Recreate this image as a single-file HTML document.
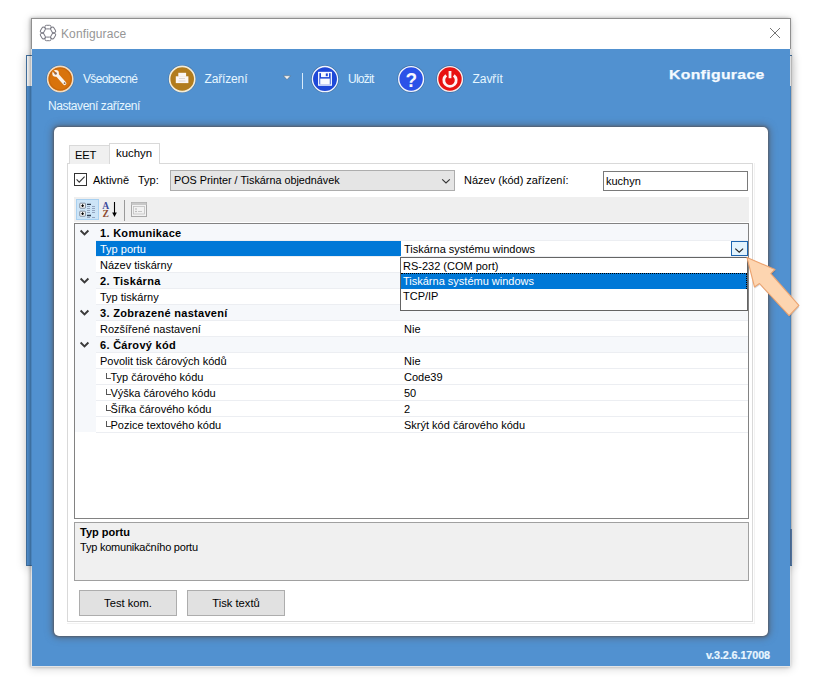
<!DOCTYPE html>
<html><head><meta charset="utf-8">
<style>
*{box-sizing:border-box;margin:0;padding:0}
html,body{width:822px;height:700px;overflow:hidden;background:#fff;font-family:"Liberation Sans",sans-serif;font-size:11px;color:#000}
.a{position:absolute}
.t{position:absolute;white-space:nowrap;line-height:1}
</style></head><body>
<div class="a" style="left:26px;top:55px;width:766px;height:511px;background:#5191d0;border:1px solid rgba(30,30,30,0.28);box-shadow:0 1px 10px 0 rgba(0,0,0,0.2)"></div>
<div class="a" style="left:27px;top:56px;width:764px;height:30px;background:#fafafa"></div>
<div class="a" style="left:31px;top:18px;width:760px;height:649px;box-shadow:0 1px 9px 0 rgba(0,0,0,0.2),-1px 0 3px 0 rgba(0,0,0,0.25)"></div>
<div class="a" style="left:32px;top:19px;width:758px;height:647px;background:#5191d0"></div>
<div class="a" style="left:791px;top:56px;width:2px;height:473px;background:linear-gradient(to right,#a8a8a8,#e4e4e4)"></div>
<div class="a" style="left:790px;top:529px;width:2px;height:36px;background:#4f709a"></div>
<div class="a" style="left:32px;top:19px;width:758px;height:30px;background:#fff"></div>
<div class="a" style="left:31px;top:18px;width:760px;height:649px;border:1px solid rgba(20,30,50,0.12)"></div>
<div class="a" style="left:31px;top:18px;width:760px;height:31px;border:1px solid #8f8f8f;border-bottom:none"></div>
<svg class="a" style="left:39px;top:24px" width="18" height="18" viewBox="0 0 18 18"><g fill="none" stroke="#7a7a84" stroke-width="1"><rect x="6" y="1.3" width="6" height="3.6" rx="1.3" transform="rotate(0 9 9)"/><rect x="6" y="1.3" width="6" height="3.6" rx="1.3" transform="rotate(60 9 9)"/><rect x="6" y="1.3" width="6" height="3.6" rx="1.3" transform="rotate(120 9 9)"/><rect x="6" y="1.3" width="6" height="3.6" rx="1.3" transform="rotate(180 9 9)"/><rect x="6" y="1.3" width="6" height="3.6" rx="1.3" transform="rotate(240 9 9)"/><rect x="6" y="1.3" width="6" height="3.6" rx="1.3" transform="rotate(300 9 9)"/></g></svg>
<div class="t" style="left:61px;top:28px;font-size:12px;color:#969696;letter-spacing:0.12px">Konfigurace</div>
<svg class="a" style="left:769px;top:27px" width="12" height="12" viewBox="0 0 12 12"><path d="M1 1L11 11M11 1L1 11" stroke="#666" stroke-width="0.9"/></svg>
<svg class="a" style="left:44px;top:63px" width="32" height="32" viewBox="0 0 32 32">
<circle cx="16.2" cy="16" r="13.9" fill="#2f4a6a" opacity="0.45"/>
<circle cx="16.2" cy="16" r="12.6" fill="#d8730c" stroke="#f3dcc0" stroke-width="1.6"/>
<circle cx="16.2" cy="16" r="11" fill="none" stroke="#c0600a" stroke-width="1.2" opacity="0.6"/>
<path d="M12.4 11.2 L20.6 20.3" stroke="#fbf3ea" stroke-width="3.5" stroke-linecap="round"/>
<circle cx="11.6" cy="10.4" r="3.3" fill="#fbf3ea"/>
<path d="M11.6 10.4 L8.6 7.4" stroke="#d8730c" stroke-width="1.8"/>
<circle cx="11.7" cy="10.5" r="1.2" fill="#8a6a5a"/>
<circle cx="20.6" cy="20.2" r="0.9" fill="#8a6a5a"/>
</svg>
<div class="t" style="left:83px;top:72.8px;font-size:12px;color:#e6f6ff;letter-spacing:-0.65px">Všeobecné</div>
<svg class="a" style="left:166px;top:63px" width="32" height="32" viewBox="0 0 32 32">
<circle cx="16.2" cy="16" r="13.9" fill="#2f4a6a" opacity="0.45"/>
<circle cx="16.2" cy="16" r="12.6" fill="#b27c1c" stroke="#f3ecd8" stroke-width="1.6"/>
<rect x="12.3" y="9.8" width="7.8" height="4" fill="#fbf6f2"/>
<rect x="9.8" y="13.3" width="12.6" height="6.8" fill="#fbf6f2"/>
<path d="M13 15.5h6M12.5 18h7" stroke="#d8d0c8" stroke-width="0.8"/>
</svg>
<div class="t" style="left:204.5px;top:72.8px;font-size:12px;color:#e6f6ff;letter-spacing:-0.15px">Zařízení</div>
<svg class="a" style="left:282px;top:74px" width="10" height="7" viewBox="0 0 10 7"><path d="M1.5 1.8h7L5 5.6z" fill="#f4f4f4" stroke="#555" stroke-width="0.4"/></svg>
<div class="a" style="left:302px;top:73px;width:1px;height:16px;background:#d8ebfa"></div>
<svg class="a" style="left:309px;top:63px" width="32" height="32" viewBox="0 0 32 32">
<circle cx="16" cy="16.1" r="13.9" fill="#2f4a6a" opacity="0.45"/>
<circle cx="16" cy="16.1" r="12.6" fill="#1e48d8" stroke="#f2f6ff" stroke-width="1.3"/>
<rect x="9.7" y="9.5" width="12.6" height="12.6" fill="none" stroke="#f8faff" stroke-width="1.3"/>
<rect x="12" y="9.5" width="8" height="4.6" fill="#f8faff"/>
<rect x="16.8" y="10.4" width="2" height="2.8" fill="#1e48d8"/>
<rect x="11.2" y="15.6" width="9.6" height="5.9" fill="#f8faff"/>
</svg>
<div class="t" style="left:348px;top:72.8px;font-size:12px;color:#e6f6ff;letter-spacing:-0.75px">Uložit</div>
<svg class="a" style="left:395px;top:63px" width="32" height="32" viewBox="0 0 32 32">
<circle cx="16.1" cy="16" r="13.7" fill="#2f4a6a" opacity="0.45"/>
<circle cx="16.1" cy="16" r="12.4" fill="#2a52e8" stroke="#f2f6ff" stroke-width="1.4"/>
<text x="16.3" y="23.8" text-anchor="middle" font-family="Liberation Sans" font-weight="bold" font-size="20" fill="#f6f8ff" transform="translate(16.3 23.8) scale(0.95 1) translate(-16.3 -23.8)">?</text>
</svg>
<svg class="a" style="left:434px;top:63px" width="32" height="32" viewBox="0 0 32 32">
<circle cx="16" cy="16" r="13.7" fill="#2f4a6a" opacity="0.45"/>
<circle cx="16" cy="16" r="12.4" fill="#e81212" stroke="#f8eeee" stroke-width="1.4"/>
<path d="M12.2 12.3 A6.2 6.2 0 1 0 19.8 12.3" fill="none" stroke="#fdf4f4" stroke-width="2.8"/>
<path d="M16 8v7.2" stroke="#fdf4f4" stroke-width="2.8"/>
</svg>
<div class="t" style="left:472.5px;top:72.8px;font-size:12px;color:#e6f6ff;letter-spacing:-0.05px">Zavřít</div>
<div class="t" style="left:669px;top:68px;font-size:13.5px;font-weight:bold;color:#f4faff;letter-spacing:0.3px;transform:scaleX(1.165);transform-origin:0 0;-webkit-text-stroke:0.25px #f4faff">Konfigurace</div>
<div class="t" style="left:48px;top:99.8px;font-size:12px;color:#e6f6ff;letter-spacing:-0.45px">Nastavení zařízení</div>
<div class="a" style="left:54px;top:127px;width:714px;height:509px;background:#fff;border-radius:5px;box-shadow:0 0 2px 1px rgba(85,92,105,0.85),0 0 7px 2px rgba(85,92,105,0.7)"></div>
<div class="a" style="left:67px;top:163px;width:688px;height:461px;border-right:1px solid #f2f2f2;border-bottom:1px solid #f2f2f2"></div>
<div class="a" style="left:67px;top:163px;width:686px;height:459px;border:1px solid #d9d9d9;background:#fff"></div>
<div class="a" style="left:69px;top:145px;width:41px;height:19px;background:#f0f0f0;border:1px solid #d9d9d9;border-bottom:none"></div>
<div class="t" style="left:75px;top:149.8px;font-size:11.2px;color:#000;letter-spacing:-0.2px">EET</div>
<div class="a" style="left:109px;top:143px;width:51px;height:21px;background:#fff;border:1px solid #d9d9d9;border-bottom:none"></div>
<div class="t" style="left:116px;top:148px;font-size:11.4px;color:#000">kuchyn</div>
<div class="a" style="left:74px;top:173px;width:13px;height:13px;border:1px solid #333;background:#fff"></div>
<svg class="a" style="left:74px;top:173px" width="13" height="13" viewBox="0 0 13 13"><path d="M2.6 6.4L5.2 9.1L10.6 3.6" fill="none" stroke="#333" stroke-width="1.1"/></svg>
<div class="t" style="left:93px;top:175px;font-size:11px">Aktivně</div>
<div class="t" style="left:138px;top:175px;font-size:11px">Typ:</div>
<div class="a" style="left:170px;top:170px;width:285px;height:21px;background:#e5e5e5;border:1px solid #adadad"></div>
<div class="t" style="left:174px;top:175px;font-size:10.8px">POS Printer / Tiskárna objednávek</div>
<svg class="a" style="left:438px;top:176px" width="14" height="9" viewBox="0 0 14 9"><path d="M4.2 3.3L8 7L11.8 3.3" fill="none" stroke="#333" stroke-width="1.1"/></svg>
<div class="t" style="left:464px;top:175px;font-size:11px">Název (kód) zařízení:</div>
<div class="a" style="left:603px;top:171px;width:145px;height:20px;background:#fff;border:1px solid #7a7a7a"></div>
<div class="t" style="left:606px;top:176px;font-size:11px">kuchyn</div>
<div class="a" style="left:74px;top:197px;width:675px;height:25px;background:#efefef"></div>
<div class="a" style="left:76px;top:199px;width:23px;height:21px;background:#cce4f7;border:1px solid #a8d0f0"></div>
<div class="a" style="left:124px;top:200px;width:1px;height:21px;background:#9a9a9a"></div>
<svg class="a" style="left:76px;top:199px" width="50" height="23" viewBox="0 0 50 23">
<rect x="3.8" y="4.2" width="5.6" height="5" fill="#fafafa" stroke="#6a7484" stroke-width="0.8" rx="0.6"/>
<path d="M6.6 5.3v2.8M5.2 6.7h2.8" stroke="#000" stroke-width="1.1"/>
<rect x="3.8" y="12.2" width="5.6" height="5" fill="#fafafa" stroke="#6a7484" stroke-width="0.8" rx="0.6"/>
<path d="M6.6 13.3v2.8M5.2 14.7h2.8" stroke="#000" stroke-width="1.1"/>
<path d="M11 5.3h4M11 16.5h4" stroke="#2a3a50" stroke-width="1.3"/>
<path d="M11 7.5h3M16 7.5h3M11 9.5h3M16 9.5h3M11 11.5h3M16 11.5h3M11 13.5h3M16 13.5h3M11 18.5h3M16 18.5h3" stroke="#7a8aa8" stroke-width="0.7"/>
<text x="29.6" y="9.8" text-anchor="middle" font-family="Liberation Serif" font-weight="bold" font-size="9.6" fill="#3c4a9c">A</text>
<text x="29.6" y="17.9" text-anchor="middle" font-family="Liberation Serif" font-weight="bold" font-size="9.6" fill="#8a4a30">Z</text>
<path d="M38.5 3v13.5" stroke="#000" stroke-width="1.1"/>
<path d="M36.2 13.5L38.5 18L40.8 13.5z" fill="#000"/>
</svg>
<svg class="a" style="left:130px;top:201px" width="18" height="17" viewBox="0 0 18 17">
<rect x="1.5" y="1.5" width="15" height="14" fill="#f2f2f2" stroke="#a8a8a8" stroke-width="1"/>
<rect x="1.5" y="1.5" width="15" height="2.5" fill="#c8c8c8"/>
<rect x="3.5" y="5.5" width="11" height="7.5" fill="none" stroke="#c0c0c0" stroke-width="0.8"/>
<circle cx="6" cy="8" r="0.7" fill="#999"/><circle cx="6" cy="10.5" r="0.7" fill="#999"/>
<path d="M8 10.5h4" stroke="#bbb" stroke-width="0.8"/>
</svg>
<div class="a" style="left:74px;top:223px;width:675px;height:296px;border:1px solid #828282;background:#fff"></div>
<div class="a" style="left:75px;top:224px;width:21px;height:208px;background:#f6f8fb"></div>
<div class="a" style="left:75px;top:224px;width:673px;height:16px;background:#f6f8fb"></div>
<svg class="a" style="left:79px;top:229px" width="11" height="8" viewBox="0 0 11 8"><path d="M1.6 1.5L5.5 5.4L9.4 1.5" fill="none" stroke="#3a3a3a" stroke-width="1.9"/></svg>
<div class="t" style="left:100px;top:227.7px;font-weight:bold;letter-spacing:0.3px">1. Komunikace</div>
<div class="a" style="left:96px;top:240px;width:652px;height:1px;background:#eceef2"></div>
<div class="a" style="left:96px;top:241px;width:305px;height:15px;background:#0078d7"></div>
<div class="a" style="left:402px;top:241px;width:346px;height:15px;background:#fff"></div>
<div class="t" style="left:100px;top:243.7px;color:#fff">Typ portu</div>
<div class="a" style="left:96px;top:256px;width:652px;height:1px;background:#eceef2"></div>
<div class="a" style="left:96px;top:257px;width:305px;height:15px;background:#fff"></div>
<div class="a" style="left:402px;top:257px;width:346px;height:15px;background:#fff"></div>
<div class="t" style="left:100px;top:259.7px;color:#000">Název tiskárny</div>
<div class="a" style="left:96px;top:272px;width:652px;height:1px;background:#eceef2"></div>
<div class="a" style="left:75px;top:273px;width:673px;height:15px;background:#f6f8fb"></div>
<svg class="a" style="left:79px;top:277px" width="11" height="8" viewBox="0 0 11 8"><path d="M1.6 1.5L5.5 5.4L9.4 1.5" fill="none" stroke="#3a3a3a" stroke-width="1.9"/></svg>
<div class="t" style="left:100px;top:275.7px;font-weight:bold;letter-spacing:0.3px">2. Tiskárna</div>
<div class="a" style="left:96px;top:288px;width:652px;height:1px;background:#eceef2"></div>
<div class="a" style="left:96px;top:289px;width:305px;height:15px;background:#fff"></div>
<div class="a" style="left:402px;top:289px;width:346px;height:15px;background:#fff"></div>
<div class="t" style="left:100px;top:291.7px;color:#000">Typ tiskárny</div>
<div class="a" style="left:96px;top:304px;width:652px;height:1px;background:#eceef2"></div>
<div class="a" style="left:75px;top:305px;width:673px;height:15px;background:#f6f8fb"></div>
<svg class="a" style="left:79px;top:309px" width="11" height="8" viewBox="0 0 11 8"><path d="M1.6 1.5L5.5 5.4L9.4 1.5" fill="none" stroke="#3a3a3a" stroke-width="1.9"/></svg>
<div class="t" style="left:100px;top:307.7px;font-weight:bold;letter-spacing:0.3px">3. Zobrazené nastavení</div>
<div class="a" style="left:96px;top:320px;width:652px;height:1px;background:#eceef2"></div>
<div class="a" style="left:96px;top:321px;width:305px;height:15px;background:#fff"></div>
<div class="a" style="left:402px;top:321px;width:346px;height:15px;background:#fff"></div>
<div class="t" style="left:100px;top:323.7px;color:#000">Rozšířené nastavení</div>
<div class="t" style="left:404px;top:323.7px">Nie</div>
<div class="a" style="left:96px;top:336px;width:652px;height:1px;background:#eceef2"></div>
<div class="a" style="left:75px;top:337px;width:673px;height:15px;background:#f6f8fb"></div>
<svg class="a" style="left:79px;top:341px" width="11" height="8" viewBox="0 0 11 8"><path d="M1.6 1.5L5.5 5.4L9.4 1.5" fill="none" stroke="#3a3a3a" stroke-width="1.9"/></svg>
<div class="t" style="left:100px;top:339.7px;font-weight:bold;letter-spacing:0.3px">6. Čárový kód</div>
<div class="a" style="left:96px;top:352px;width:652px;height:1px;background:#eceef2"></div>
<div class="a" style="left:96px;top:353px;width:305px;height:15px;background:#fff"></div>
<div class="a" style="left:402px;top:353px;width:346px;height:15px;background:#fff"></div>
<div class="t" style="left:100px;top:355.7px;color:#000">Povolit tisk čárových kódů</div>
<div class="t" style="left:404px;top:355.7px">Nie</div>
<div class="a" style="left:96px;top:368px;width:652px;height:1px;background:#eceef2"></div>
<div class="a" style="left:96px;top:369px;width:305px;height:15px;background:#fff"></div>
<div class="a" style="left:402px;top:369px;width:346px;height:15px;background:#fff"></div>
<div class="a" style="left:106px;top:373px;width:5px;height:6px;border-left:1px solid #555;border-bottom:1px solid #555"></div>
<div class="t" style="left:110.5px;top:371.7px;color:#000">Typ čárového kódu</div>
<div class="t" style="left:404px;top:371.7px">Code39</div>
<div class="a" style="left:96px;top:384px;width:652px;height:1px;background:#eceef2"></div>
<div class="a" style="left:96px;top:385px;width:305px;height:15px;background:#fff"></div>
<div class="a" style="left:402px;top:385px;width:346px;height:15px;background:#fff"></div>
<div class="a" style="left:106px;top:389px;width:5px;height:6px;border-left:1px solid #555;border-bottom:1px solid #555"></div>
<div class="t" style="left:110.5px;top:387.7px;color:#000">Výška čárového kódu</div>
<div class="t" style="left:404px;top:387.7px">50</div>
<div class="a" style="left:96px;top:400px;width:652px;height:1px;background:#eceef2"></div>
<div class="a" style="left:96px;top:401px;width:305px;height:15px;background:#fff"></div>
<div class="a" style="left:402px;top:401px;width:346px;height:15px;background:#fff"></div>
<div class="a" style="left:106px;top:405px;width:5px;height:6px;border-left:1px solid #555;border-bottom:1px solid #555"></div>
<div class="t" style="left:110.5px;top:403.7px;color:#000">Šířka čárového kódu</div>
<div class="t" style="left:404px;top:403.7px">2</div>
<div class="a" style="left:96px;top:416px;width:652px;height:1px;background:#eceef2"></div>
<div class="a" style="left:96px;top:417px;width:305px;height:15px;background:#fff"></div>
<div class="a" style="left:402px;top:417px;width:346px;height:15px;background:#fff"></div>
<div class="a" style="left:106px;top:421px;width:5px;height:6px;border-left:1px solid #555;border-bottom:1px solid #555"></div>
<div class="t" style="left:110.5px;top:419.7px;color:#000">Pozice textového kódu</div>
<div class="t" style="left:404px;top:419.7px">Skrýt kód čárového kódu</div>
<div class="a" style="left:96px;top:432px;width:652px;height:1px;background:#eceef2"></div>
<div class="t" style="left:404px;top:243.7px">Tiskárna systému windows</div>
<div class="a" style="left:731px;top:241px;width:17px;height:15px;background:#e2f3fd;border:1px solid #1c65b0"></div>
<svg class="a" style="left:732px;top:243px" width="15" height="11" viewBox="0 0 15 11"><path d="M3.3 5.6L7.2 9.2L11.1 5.6" fill="none" stroke="#222" stroke-width="1.15"/></svg>
<div class="a" style="left:400px;top:257px;width:348px;height:54px;background:#fff;border:1px solid #646464"></div>
<div class="t" style="left:403px;top:260.5px">RS-232 (COM port)</div>
<div class="a" style="left:401px;top:273px;width:346px;height:16px;background:#0078d7;border-top:1px dotted #000;border-right:1px dotted #000"></div>
<div class="t" style="left:403px;top:275.5px;color:#fff">Tiskárna systému windows</div>
<div class="t" style="left:403px;top:290.5px">TCP/IP</div>
<div class="a" style="left:74px;top:522px;width:675px;height:59px;border:1px solid #a0a0a0;background:#f0f0f0"></div>
<div class="t" style="left:80px;top:527px;font-size:11px;font-weight:bold">Typ portu</div>
<div class="t" style="left:80px;top:542px;font-size:11px;letter-spacing:-0.22px">Typ komunikačního portu</div>
<div class="a" style="left:79px;top:590px;width:98px;height:26px;background:#e1e1e1;border:1px solid #adadad"></div>
<div class="t" style="left:79px;top:598px;width:98px;text-align:center;font-size:11.2px">Test kom.</div>
<div class="a" style="left:187px;top:590px;width:98px;height:26px;background:#e1e1e1;border:1px solid #adadad"></div>
<div class="t" style="left:187px;top:598px;width:98px;text-align:center;font-size:11.2px">Tisk textů</div>
<div class="t" style="left:706px;top:649.6px;font-size:10.8px;font-weight:bold;color:#eaf6ff;letter-spacing:-0.1px;-webkit-text-stroke:0.2px #eaf6ff">v.3.2.6.17008</div>
<svg class="a" style="left:740px;top:250px" width="70" height="75" viewBox="0 0 70 75">
<path d="M7.5 9 L35.5 21 L31.3 25 L59.4 56.9 L49.6 67.2 L20 35 L15 38.5 Z" fill="#1a3050" opacity="0.18"/>
<path d="M7 7.5 L35 19.5 L30.8 23.6 L58.9 55.4 L49.1 65.7 L19.5 33.5 L14.5 37 Z" fill="#fdd5b0" stroke="#eca470" stroke-width="1.1" stroke-linejoin="round"/>
</svg>
</body></html>
